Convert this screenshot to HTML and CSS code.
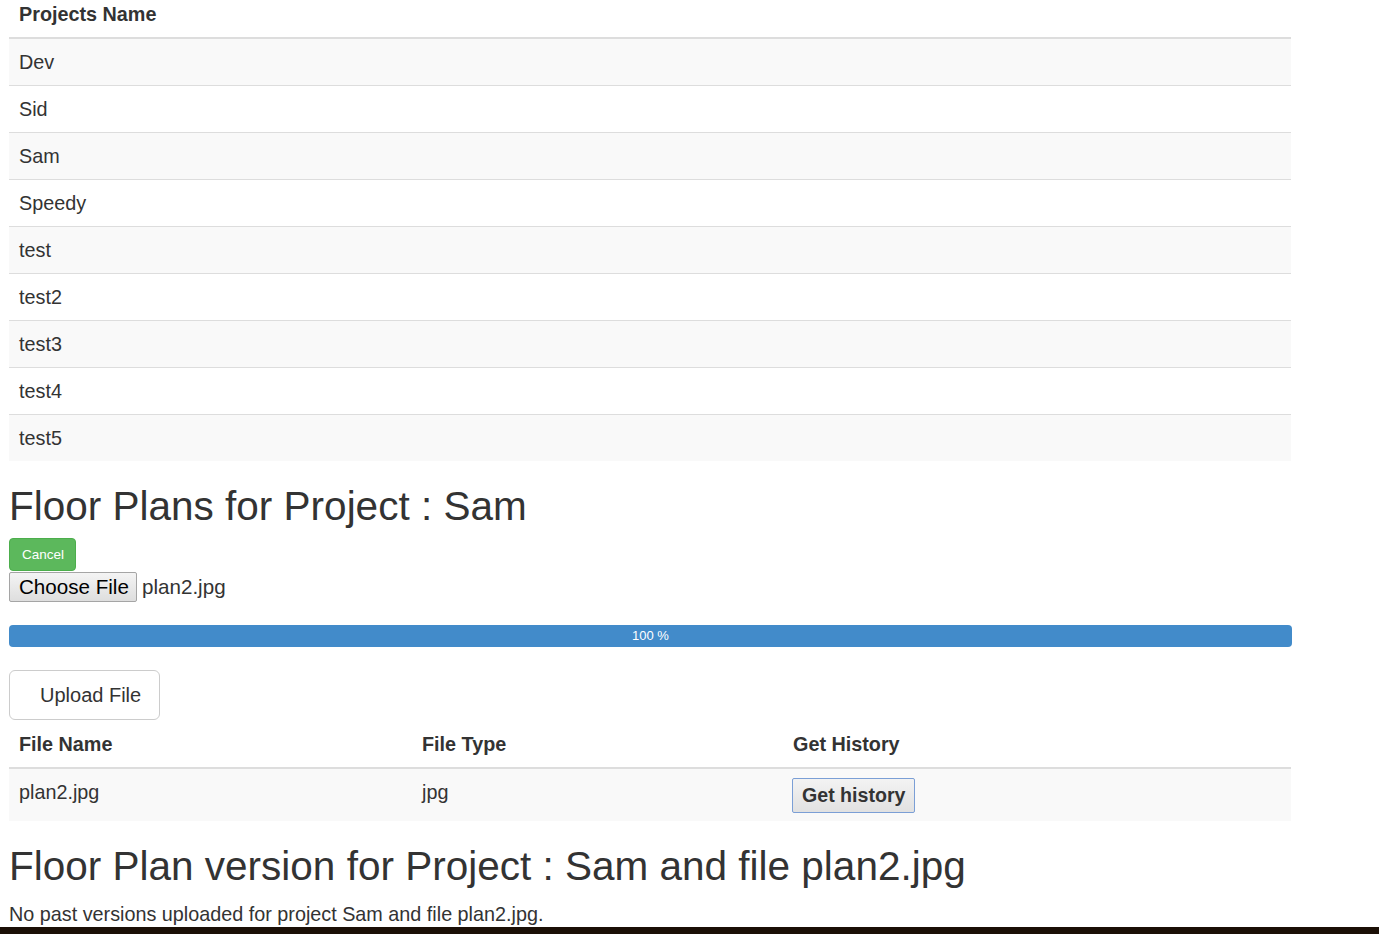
FILE: index.html
```html
<!DOCTYPE html>
<html lang="en">
<head>
<meta charset="utf-8">
<title>Floor Plans</title>
<link rel="stylesheet" href="styles.css">
</head>
<body>
<div class="page">
  <table class="table projects">
    <thead>
      <tr><th>Projects Name</th></tr>
    </thead>
    <tbody>
      <tr><td>Dev</td></tr>
      <tr><td>Sid</td></tr>
      <tr><td>Sam</td></tr>
      <tr><td>Speedy</td></tr>
      <tr><td>test</td></tr>
      <tr><td>test2</td></tr>
      <tr><td>test3</td></tr>
      <tr><td>test4</td></tr>
      <tr><td>test5</td></tr>
    </tbody>
  </table>

  <h2 class="title">Floor Plans for Project : Sam</h2>
  <button class="btn-cancel" type="button">Cancel</button>
  <div class="file-row">
    <span class="file-btn">Choose File</span>
    <span class="file-name">plan2.jpg</span>
  </div>

  <div class="progress">
    <div class="progress-bar" style="width: 100%">100 %</div>
  </div>

  <button class="btn-upload" type="button">Upload File</button>

  <table class="table files">
    <colgroup>
      <col class="c1">
      <col class="c2">
      <col class="c3">
    </colgroup>
    <thead>
      <tr><th>File Name</th><th>File Type</th><th>Get History</th></tr>
    </thead>
    <tbody>
      <tr>
        <td>plan2.jpg</td>
        <td>jpg</td>
        <td><button class="btn-history" type="button">Get history</button></td>
      </tr>
    </tbody>
  </table>

  <h2 class="title">Floor Plan version for Project : Sam and file plan2.jpg</h2>
  <p class="note">No past versions uploaded for project Sam and file plan2.jpg.</p>
</div>
<div class="bottom-bar"></div>
</body>
</html>
```

FILE: styles.css
```css
html, body {
  margin: 0;
  padding: 0;
  overflow: hidden;
  background: #fff;
}

body {
  font-family: "Liberation Sans", Arial, Helvetica, sans-serif;
  font-size: 19.8px;
  line-height: 26px;
  color: #333;
}

.page {
  padding-left: 9px;
  width: 1282px;
}

.table {
  width: 1282px;
  border-collapse: collapse;
  border-spacing: 0;
  margin: 0;
}

.table th {
  text-align: left;
  font-weight: bold;
  padding: 1px 10px 10px;
  border-bottom: 2px solid #ddd;
  vertical-align: bottom;
}

.table td {
  padding: 10px;
  border-top: 1px solid #ddd;
  vertical-align: top;
}

.table tbody tr:nth-child(odd) td {
  background: #f9f9f9;
}

.table thead + tbody tr:first-child td {
  border-top: 0;
}

.files {
  table-layout: fixed;
}

.files th {
  padding-top: 11px;
}

.files td {
  padding-bottom: 8px;
}

.files .c1 { width: 403px; }
.files .c2 { width: 371px; }
.files .c3 { width: 508px; }

.title {
  font-size: 40.5px;
  line-height: 47px;
  font-weight: normal;
  margin: 22px 0 8px;
  color: #333;
}

.btn-cancel {
  display: block;
  font-family: "Liberation Sans", Arial, sans-serif;
  font-size: 13.5px;
  line-height: 19px;
  padding: 6px 12px;
  color: #fff;
  background: #5cb85c;
  border: 1px solid #4cae4c;
  border-radius: 4px;
  width: 67px;
  height: 33px;
  text-align: center;
}

.file-row {
  display: flex;
  align-items: center;
  gap: 5px;
  margin-top: 1px;
  font-size: 20.6px;
}

.file-btn {
  display: inline-block;
  box-sizing: border-box;
  height: 30px;
  width: 128px;
  font-size: 20.6px;
  line-height: 24px;
  padding: 2px 8px 2px 9px;
  color: #000;
  background: linear-gradient(#f4f4f4, #dedede);
  border: 1px solid #a5a5a5;
  border-radius: 2px;
  white-space: nowrap;
}

.file-name {
  color: #333;
}

.progress {
  margin: 23px 0;
  height: 22px;
  width: 1283px;
  background: #f5f5f5;
  border-radius: 4px;
  overflow: hidden;
}

.progress-bar {
  height: 22px;
  background: #428bca;
  color: #fff;
  font-size: 13px;
  line-height: 22px;
  text-align: center;
}

.btn-upload {
  display: block;
  font-family: "Liberation Sans", Arial, sans-serif;
  font-size: 20px;
  line-height: 26px;
  color: #333;
  background: #fff;
  border: 1px solid #ccc;
  border-radius: 6px;
  padding: 11px 17px 11px 30px;
  height: 50px;
  width: 151px;
  text-align: left;
}

.btn-history {
  font-family: "Liberation Sans", Arial, sans-serif;
  font-size: 19.6px;
  font-weight: bold;
  line-height: 23px;
  color: #333;
  padding: 5px 9px;
  margin: -1px 0 0 -1px;
  background: linear-gradient(#f3f3f3, #e1e1e1);
  border: 1px solid #7b9fd6;
  border-radius: 2px;
  display: block;
  white-space: nowrap;
}

.note {
  margin: 11px 0 0;
}

.bottom-bar {
  height: 7px;
  width: 100%;
  background: #1b0f06;
}
```
